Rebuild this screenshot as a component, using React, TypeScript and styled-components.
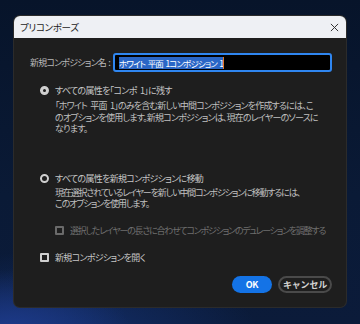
import styled, { createGlobalStyle } from "styled-components";

const GlobalStyle = createGlobalStyle`
  html, body {
    margin: 0;
    padding: 0;
  }
  body {
    width: 360px;
    height: 324px;
    overflow: hidden;
    background:
      radial-gradient(ellipse 120px 60px at 10px 330px, #1d3a8a 0%, rgba(29, 58, 138, 0) 100%),
      radial-gradient(ellipse 200px 90px at 60px 340px, #14306e 0%, rgba(20, 48, 110, 0) 100%),
      linear-gradient(180deg, #07142a 0%, #0a1a36 60%, #0b1b3a 100%);
    font-family: "Noto Sans CJK JP", "Noto Sans", sans-serif;
    font-feature-settings: "palt";
  }
`;

const Dialog = styled.div`
  margin: 16px 0 0 14px;
  width: 332px;
  height: 291px;
  border-radius: 6px;
  overflow: hidden;
  background: #1e1e1e;
  box-shadow: 0 0 0 1px #2b2b2b;
  display: flex;
  flex-direction: column;
`;

const TitleBar = styled.div`
  height: 22px;
  flex: none;
  background: #eef0f4;
  display: flex;
  align-items: center;
  justify-content: space-between;
  padding: 0 7px 0 6px;
  font-size: 9.5px;
  letter-spacing: -0.3px;
  color: #1b1b1b;
`;

const CloseIcon = styled.svg`
  width: 9px;
  height: 9px;
`;

const Body = styled.div`
  padding: 15px 14px 0 16px;
  display: flex;
  flex-direction: column;
  color: #c6c6c6;
  font-size: 9px;
  word-spacing: 2px;
`;

const NameRow = styled.div`
  display: flex;
  align-items: center;
  justify-content: space-between;
`;

const Label = styled.span`
  flex: none;
  color: #b8b8b8;
  letter-spacing: -0.8px;
  word-spacing: 1px;
  white-space: nowrap;
`;

const Input = styled.div`
  flex: none;
  width: 219px;
  height: 19px;
  box-sizing: border-box;
  border: 2px solid #2f86f0;
  border-radius: 3px;
  background: #000;
  display: flex;
  align-items: center;
  padding-left: 4px;
`;

const Selected = styled.span`
  background: #2a66c6;
  color: #ffffff;
  font-size: 8.5px;
  line-height: 12px;
  white-space: nowrap;
  letter-spacing: -0.9px;
  word-spacing: 1.5px;
`;

const Caret = styled.span`
  width: 1px;
  height: 12px;
  background: #e07a2a;
`;

const OptionRow = styled.div<{ $top: number; $indent?: number; $dim?: boolean }>`
  display: flex;
  align-items: center;
  gap: 6px;
  height: 12px;
  margin-top: ${(p) => p.$top}px;
  padding-left: ${(p) => p.$indent ?? 10}px;
  color: ${(p) => (p.$dim ? "#6f6f6f" : "#c6c6c6")};
  letter-spacing: ${(p) => (p.$dim ? "-1.25px" : "-0.7px")};
  white-space: nowrap;
`;

const Radio = styled.span<{ $on?: boolean }>`
  width: 9px;
  height: 9px;
  box-sizing: border-box;
  border-radius: 50%;
  border: ${(p) => (p.$on ? "3px" : "2px")} solid #cfcfcf;
  background: #1e1e1e;
  flex: none;
`;

const Check = styled.span<{ $dim?: boolean }>`
  width: 9px;
  height: 9px;
  box-sizing: border-box;
  border-radius: 1px;
  border: 2px solid ${(p) => (p.$dim ? "#6a6a6a" : "#cfcfcf")};
  background: #1e1e1e;
  flex: none;
`;

const Desc = styled.p<{ $top: number; $ls: number }>`
  margin: ${(p) => p.$top}px 0 0 25px;
  line-height: 11.5px;
  color: #c0c0c0;
  letter-spacing: ${(p) => p.$ls}px;
  white-space: nowrap;
`;

const Buttons = styled.div`
  display: flex;
  justify-content: flex-end;
  gap: 6px;
  margin-top: 12px;
`;

const Button = styled.button<{ $primary?: boolean }>`
  height: 17px;
  box-sizing: border-box;
  border-radius: 9px;
  font-family: inherit;
  font-size: 9px;
  font-weight: 700;
  letter-spacing: -0.2px;
  padding: 0;
  width: ${(p) => (p.$primary ? "40px" : "54px")};
  color: ${(p) => (p.$primary ? "#ffffff" : "#d2d2d2")};
  background: ${(p) => (p.$primary ? "#1473e6" : "transparent")};
  border: ${(p) => (p.$primary ? "none" : "2px solid #4a4a4a")};
`;

export default function App() {
  return (
    <>
      <GlobalStyle />
      <Dialog>
        <TitleBar>
          <span>プリコンポーズ</span>
          <CloseIcon viewBox="0 0 10 10">
            <path d="M1 1L9 9M9 1L1 9" stroke="#333" strokeWidth="1.1" />
          </CloseIcon>
        </TitleBar>
        <Body>
          <NameRow>
            <Label>新規コンポジション名 :</Label>
            <Input>
              <Selected>ホワイト 平面 1コンポジション 1</Selected>
              <Caret />
            </Input>
          </NameRow>
          <OptionRow $top={12}>
            <Radio $on />
            <span>すべての属性を「コンポ 1」に残す</span>
          </OptionRow>
          <Desc $top={4} $ls={-0.8}>
            「ホワイト 平面 1」のみを含む新しい中間コンポジションを作成するには、こ
            <br />
            のオプションを使用します。新規コンポジションは、現在のレイヤーのソースに
            <br />
            なります。
          </Desc>
          <OptionRow $top={38}>
            <Radio />
            <span>すべての属性を新規コンポジションに移動</span>
          </OptionRow>
          <Desc $top={2} $ls={-1.15}>
            現在選択されているレイヤーを新しい中間コンポジションに移動するには、
            <br />
            このオプションを使用します。
          </Desc>
          <OptionRow $top={15} $indent={25} $dim>
            <Check $dim />
            <span>選択したレイヤーの長さに合わせてコンポジションのデュレーションを調整する</span>
          </OptionRow>
          <OptionRow $top={15}>
            <Check />
            <span>新規コンポジションを開く</span>
          </OptionRow>
          <Buttons>
            <Button $primary>OK</Button>
            <Button>キャンセル</Button>
          </Buttons>
        </Body>
      </Dialog>
    </>
  );
}
